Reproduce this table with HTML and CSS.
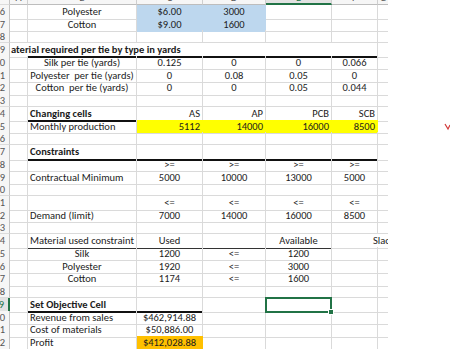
FILE: index.html
```html
<!DOCTYPE html>
<html>
<head>
<meta charset="utf-8">
<link rel="stylesheet" href="styles.css">
</head>
<body>
<div class="sheet">
  <div class="row hdr">
    <div class="rh"></div><div><span>A</span></div><div><span>B</span></div><div><span>C</span></div><div><span>D</span></div><div class="selcol"><span>E</span></div><div><span>F</span></div><div class="g"><span>G</span></div>
  </div>
  <div class="row">
    <div class="rh">26</div><div></div><div class="c">Polyester</div><div class="c blue">$6.00</div><div class="c blue">3000</div><div></div><div></div><div class="g"></div>
  </div>
  <div class="row">
    <div class="rh">27</div><div></div><div class="c">Cotton</div><div class="c blue">$9.00</div><div class="c blue">1600</div><div></div><div></div><div class="g"></div>
  </div>
  <div class="row">
    <div class="rh">28</div><div></div><div></div><div></div><div></div><div></div><div></div><div class="g"></div>
  </div>
  <div class="row">
    <div class="rh">29</div><div class="over b">aterial required per tie by type in yards</div><div class="merge5 thick"></div><div class="g"></div>
  </div>
  <div class="row">
    <div class="rh">30</div><div></div><div class="c">Silk per tie (yards)</div><div class="c">0.125</div><div class="c">0</div><div class="c">0</div><div class="c">0.066</div><div class="g"></div>
  </div>
  <div class="row">
    <div class="rh">31</div><div></div><div class="c pre">Polyester  per tie (yards)</div><div class="c">0</div><div class="c">0.08</div><div class="c">0.05</div><div class="c">0</div><div class="g"></div>
  </div>
  <div class="row">
    <div class="rh">32</div><div></div><div class="c pre">Cotton  per tie (yards)</div><div class="c">0</div><div class="c">0</div><div class="c">0.05</div><div class="c">0.044</div><div class="g"></div>
  </div>
  <div class="row">
    <div class="rh">33</div><div></div><div></div><div></div><div></div><div></div><div></div><div class="g"></div>
  </div>
  <div class="row">
    <div class="rh">34</div><div></div><div class="l b thick">Changing cells</div><div class="r thick">AS</div><div class="r thick">AP</div><div class="r thick">PCB</div><div class="r thick">SCB</div><div class="g"></div>
  </div>
  <div class="row">
    <div class="rh">35</div><div></div><div class="l">Monthly production</div><div class="r yellow">5112</div><div class="r yellow">14000</div><div class="r yellow">16000</div><div class="r yellow">8500</div><div class="g"></div>
  </div>
  <div class="row">
    <div class="rh">36</div><div></div><div></div><div></div><div></div><div></div><div></div><div class="g"></div>
  </div>
  <div class="row">
    <div class="rh">37</div><div></div><div class="l b thick">Constraints</div><div class="thick"></div><div class="thick"></div><div class="thick"></div><div class="thick"></div><div class="g"></div>
  </div>
  <div class="row">
    <div class="rh">38</div><div></div><div></div><div class="c">&gt;=</div><div class="c">&gt;=</div><div class="c">&gt;=</div><div class="c">&gt;=</div><div class="g"></div>
  </div>
  <div class="row">
    <div class="rh">39</div><div></div><div class="l">Contractual Minimum</div><div class="c">5000</div><div class="c">10000</div><div class="c">13000</div><div class="c">5000</div><div class="g"></div>
  </div>
  <div class="row">
    <div class="rh">40</div><div></div><div></div><div></div><div></div><div></div><div></div><div class="g"></div>
  </div>
  <div class="row">
    <div class="rh">41</div><div></div><div></div><div class="c">&lt;=</div><div class="c">&lt;=</div><div class="c">&lt;=</div><div class="c">&lt;=</div><div class="g"></div>
  </div>
  <div class="row">
    <div class="rh">42</div><div></div><div class="l">Demand (limit)</div><div class="c">7000</div><div class="c">14000</div><div class="c">16000</div><div class="c">8500</div><div class="g"></div>
  </div>
  <div class="row">
    <div class="rh">43</div><div></div><div></div><div></div><div></div><div></div><div></div><div class="g"></div>
  </div>
  <div class="row">
    <div class="rh">44</div><div></div><div class="c mid">Material used constraint</div><div class="c mid">Used</div><div class="mid"></div><div class="c mid">Available</div><div class="noright"></div><div class="g"><span class="slack">Slack</span></div>
  </div>
  <div class="row">
    <div class="rh">45</div><div></div><div class="c">Silk</div><div class="c">1200</div><div class="c">&lt;=</div><div class="c">1200</div><div></div><div class="g"></div>
  </div>
  <div class="row">
    <div class="rh">46</div><div></div><div class="c">Polyester</div><div class="c">1920</div><div class="c">&lt;=</div><div class="c">3000</div><div></div><div class="g"></div>
  </div>
  <div class="row">
    <div class="rh">47</div><div></div><div class="c">Cotton</div><div class="c">1174</div><div class="c">&lt;=</div><div class="c">1600</div><div></div><div class="g"></div>
  </div>
  <div class="row">
    <div class="rh">48</div><div></div><div></div><div></div><div></div><div></div><div></div><div class="g"></div>
  </div>
  <div class="row">
    <div class="rh selrow">49</div><div></div><div class="l b thick">Set Objective Cell</div><div class="thick"></div><div></div><div class="selcell"></div><div></div><div class="g"></div>
  </div>
  <div class="row">
    <div class="rh">50</div><div></div><div class="l">Revenue from sales</div><div class="c">$462,914.88</div><div></div><div></div><div></div><div class="g"></div>
  </div>
  <div class="row">
    <div class="rh">51</div><div></div><div class="l">Cost of materials</div><div class="c">$50,886.00</div><div></div><div></div><div></div><div class="g"></div>
  </div>
  <div class="row">
    <div class="rh">52</div><div></div><div class="l">Profit</div><div class="c orange">$412,028.88</div><div></div><div></div><div></div><div class="g"></div>
  </div>
</div>
<svg class="mark" width="6" height="10" viewBox="0 0 6 10"><path d="M1 3 L4 8 L6 4" fill="none" stroke="#d23a3a" stroke-width="1.2"/></svg>
</body>
</html>
```

FILE: styles.css
```css
* { box-sizing: border-box; }
html, body { margin: 0; padding: 0; background: #fff; }
body {
  width: 450px;
  height: 351px;
  overflow: hidden;
  position: relative;
  font-family: "Carlito", "Lato", "Liberation Sans", sans-serif;
  font-size: 10.5px;
  color: #1c1c1c;
}
.sheet { width: 388px; overflow: hidden; }
.row {
  display: grid;
  grid-template-columns: 10px 18px 109px 66px 63px 66px 46px 10px;
  height: 12.74px;
}
.row > div {
  border-right: 1px solid #dadada;
  border-bottom: 1px solid #dadada;
  white-space: nowrap;
  overflow: visible;
  padding: 1px 2px 0 2px;
  line-height: 12.5px;
}
.row > div.g { border-right: none; }
.hdr { height: 5px; }
.hdr > div {
  background: #f6f6f6;
  border-right-color: #cfcfcf;
  border-bottom-color: #bdbdbd;
  text-align: center;
  color: #555;
  line-height: 12px;
  padding: 0;
  overflow: hidden;
}
.row.hdr > div.g { overflow: hidden; }
.hdr span { display: block; margin-top: -8px; }
.hdr > div.selcol { background: #e2e2e2; border-bottom: 2px solid #217346; color: #217346; }
.row > div.rh {
  background: #f6f6f6;
  border-right-color: #c4c4c4;
  border-bottom-color: #dcdcdc;
  display: flex;
  justify-content: flex-end;
  padding: 1px 4px 0 0;
  color: #555;
  overflow: hidden;
}
.row > div.selrow {
  background: #e2e2e2;
  color: #217346;
  border-right: 2px solid #217346;
}
.c { text-align: center; }
.l { text-align: left; }
.r { text-align: right; }
.b { font-weight: bold; }
.pre { white-space: pre !important; }
.row > div.over { border-right: none; padding-left: 1px; position: relative; z-index: 1; }
.merge5 { grid-column: span 5; }
.row > div.thick { border-bottom: 2px solid #111; }
.row > div.mid { border-bottom: 1.5px solid #333; }
.row > div.noright { border-right: none; }
.blue { background: #bdd7ee; }
.row > div.blue { border-right-color: #bdd7ee; border-bottom-color: #bdd7ee; }
.yellow { background: #ffff00; }
.row > div.yellow { border-right-color: #ffff00; }
.orange { background: #ffc000; }
.row > div.orange { border-right-color: #ffc000; }
.slack { display: inline-block; margin-left: -7px; }
.row > div.selcell { position: relative; }
.selcell::after {
  content: "";
  position: absolute;
  left: -1px; top: -1px; right: -1px; bottom: -1px;
  border: 2px solid #217346;
}
.selcell::before {
  content: "";
  position: absolute;
  right: -3px; bottom: -3px;
  width: 4px; height: 4px;
  background: #217346;
  border: 1px solid #fff;
  z-index: 2;
}
.mark { position: absolute; left: 444px; top: 121px; }
```
